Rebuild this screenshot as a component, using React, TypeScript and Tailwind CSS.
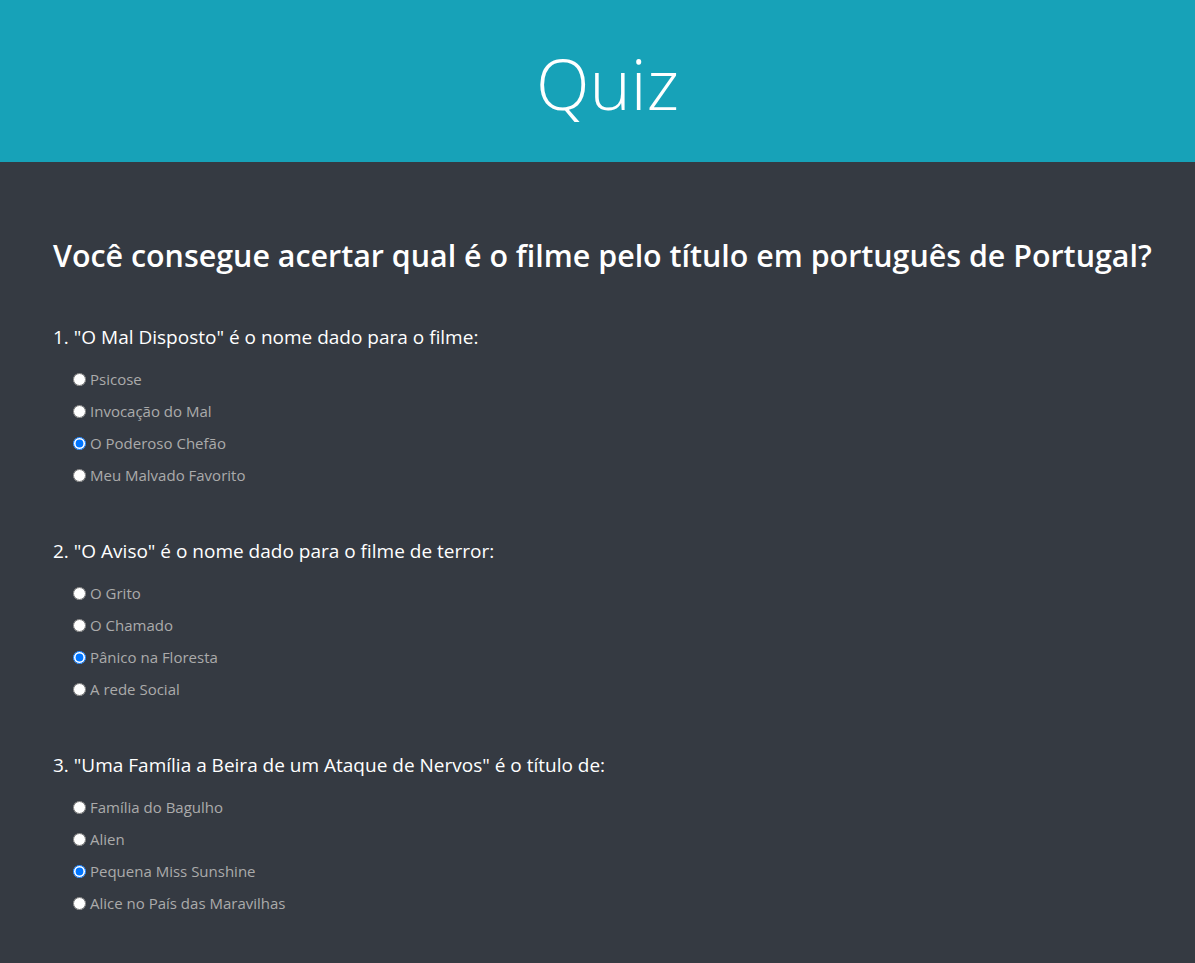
const questions = [
    {
        id: "q1",
        title: '1. "O Mal Disposto" é o nome dado para o filme:',
        options: ["Psicose", "Invocação do Mal", "O Poderoso Chefão", "Meu Malvado Favorito"],
        checked: 2,
    },
    {
        id: "q2",
        title: '2. "O Aviso" é o nome dado para o filme de terror:',
        options: ["O Grito", "O Chamado", "Pânico na Floresta", "A rede Social"],
        checked: 2,
    },
    {
        id: "q3",
        title: '3. "Uma Família a Beira de um Ataque de Nervos" é o título de:',
        options: ["Família do Bagulho", "Alien", "Pequena Miss Sunshine", "Alice no País das Maravilhas"],
        checked: 2,
    },
];

export default function App() {
    return (
        <div className="min-h-[963px] bg-[#353a42] font-['Open_Sans',sans-serif]">
            <header className="h-[162px] bg-[#17a2b8] flex items-center justify-center pl-[20px]">
                <h1 className="text-[70px] font-light text-white leading-none pt-[4px]">Quiz</h1>
            </header>
            <main className="pl-[53px] pr-[20px] pt-[74px]">
                <h2 className="text-[30.4px] font-semibold text-white leading-[40px] whitespace-nowrap">
                    Você consegue acertar qual é o filme pelo título em português de Portugal?
                </h2>
                <div className="mt-[47px] flex flex-col gap-[46px]">
                    {questions.map((q) => (
                        <div key={q.id}>
                            <p className="text-[19px] text-white leading-[28px]">{q.title}</p>
                            <ul className="mt-[12px] pl-[20px] flex flex-col">
                                {q.options.map((opt, i) => (
                                    <li key={opt} className="h-[32px] flex items-center">
                                        <label className="flex items-center text-[15px] text-[#ababab]">
                                            <input
                                                type="radio"
                                                name={q.id}
                                                defaultChecked={i === q.checked}
                                                className="w-[13px] h-[13px] mr-[4px]"
                                            />
                                            {opt}
                                        </label>
                                    </li>
                                ))}
                            </ul>
                        </div>
                    ))}
                </div>
            </main>
        </div>
    );
}
